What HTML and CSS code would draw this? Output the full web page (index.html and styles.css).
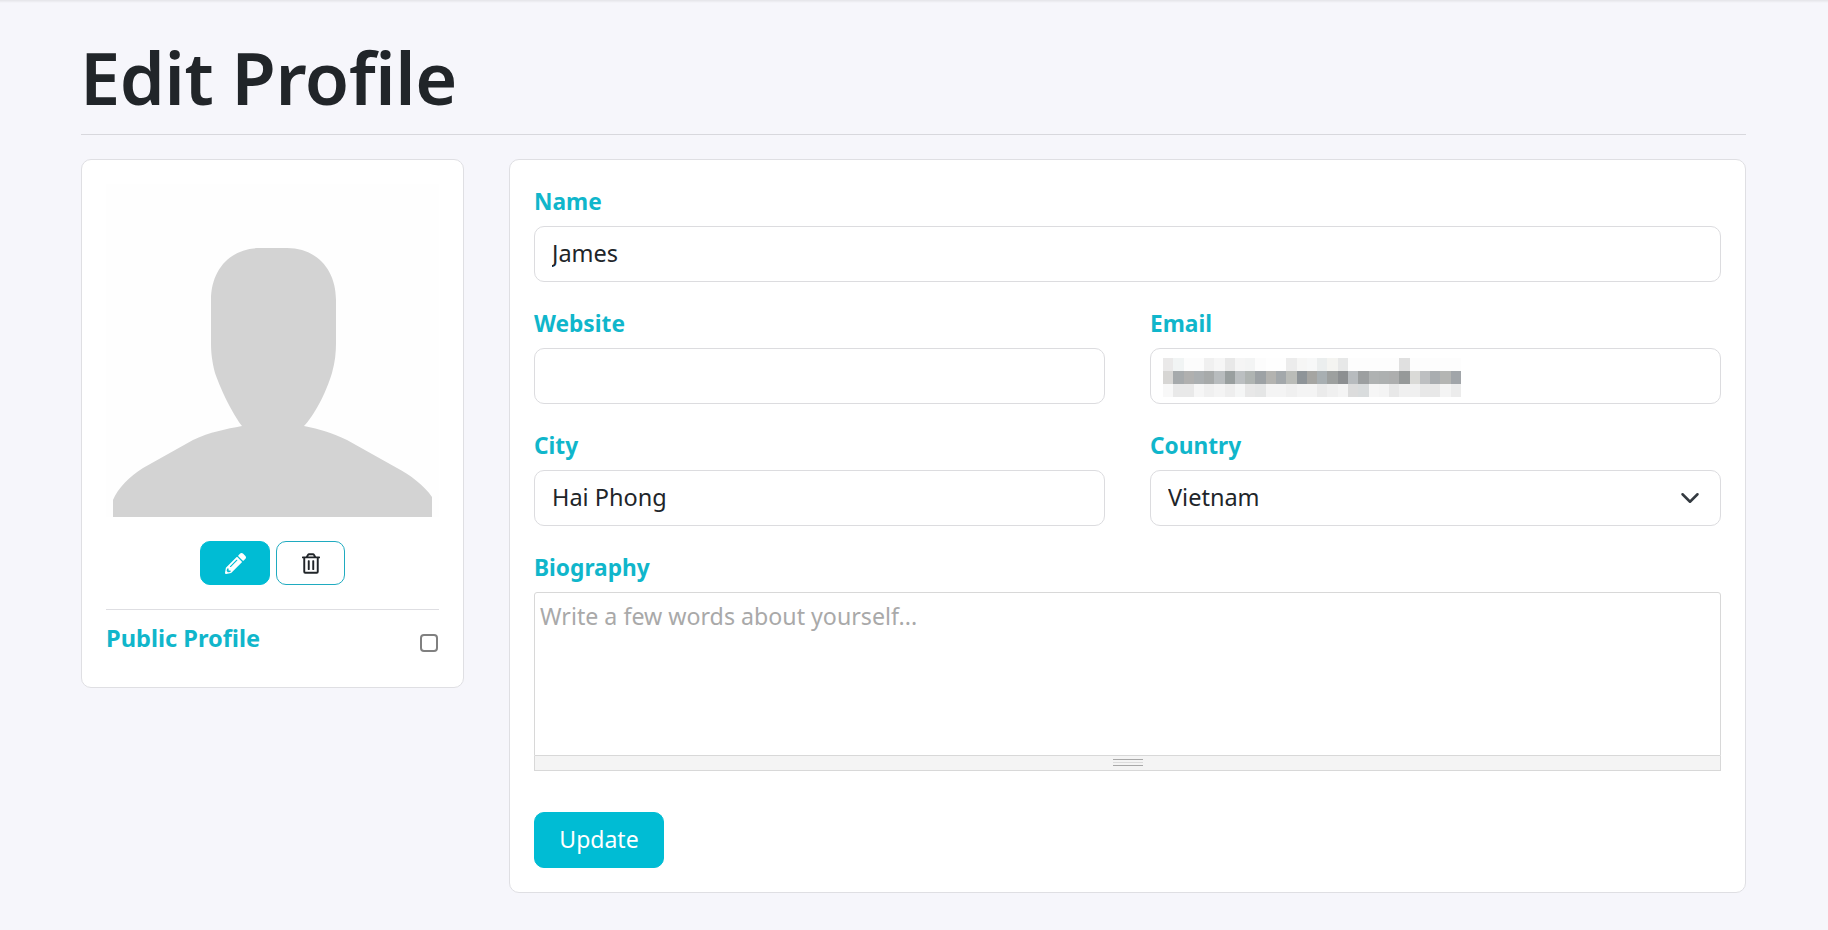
FILE: index.html
```html
<!DOCTYPE html>
<html lang="en">
<head>
<meta charset="utf-8">
<title>Edit Profile</title>
<link rel="stylesheet" href="styles.css">
</head>
<body>
<div class="topbar"></div>
<main class="page">
  <h1 class="title">Edit Profile</h1>
  <hr class="rule">
  <div class="columns">
    <aside class="card side">
      <svg class="avatar" viewBox="0 -1 333 333" aria-hidden="true">
        <path fill="#d3d3d3" d="M7 333V315C12 303 24 291 37 283L87 255C104 247 120 244 136 241C128 231 116 208 109 188C106 176 105 168 105 158V115C105 84 125 63 154 63H181C210 63 230 84 230 115V158C230 168 229 177 226 188C220 208 208 231 198 241C214 244 226 248 241 255L291 283C304 290 318 300 326 312V333Z"/>
      </svg>
      <div class="avatar-actions">
        <button type="button" class="icon-btn icon-btn-fill">
          <svg class="icon-pencil" viewBox="0 0 512 512" aria-hidden="true"><path fill="#fff" d="M497.9 142.1l-46.1 46.1c-4.7 4.7-12.3 4.7-17 0l-111-111c-4.7-4.7-4.7-12.3 0-17l46.1-46.1c18.7-18.7 49.1-18.7 67.9 0l60.1 60.1c18.8 18.7 18.8 49.1 0 67.9zM284.2 99.8L21.6 362.4.4 483.9c-2.9 16.4 11.4 30.6 27.8 27.8l121.5-21.3 262.6-262.6c4.7-4.7 4.7-12.3 0-17l-111-111c-4.8-4.7-12.4-4.7-17.1 0zM124.1 339.9c-5.5-5.5-5.5-14.3 0-19.8l154-154c5.5-5.5 14.3-5.5 19.8 0s5.5 14.3 0 19.8l-154 154c-5.5 5.5-14.3 5.5-19.8 0zM88 424h48v36.3l-64.5 11.3-31.1-31.1L51.7 376H88v48z"/></svg>
        </button>
        <button type="button" class="icon-btn icon-btn-line">
          <svg class="icon-trash" viewBox="0 0 448 512" aria-hidden="true"><path fill="#212529" d="M268 416h24a12 12 0 0 0 12-12V188a12 12 0 0 0-12-12h-24a12 12 0 0 0-12 12v216a12 12 0 0 0 12 12zM432 80h-82.41l-34-56.7A48 48 0 0 0 274.41 0H173.59a48 48 0 0 0-41.16 23.3L98.41 80H16A16 16 0 0 0 0 96v16a16 16 0 0 0 16 16h16v336a48 48 0 0 0 48 48h288a48 48 0 0 0 48-48V128h16a16 16 0 0 0 16-16V96a16 16 0 0 0-16-16zM171.84 50.91A6 6 0 0 1 177 48h94a6 6 0 0 1 5.15 2.91L293.61 80H154.39zM368 464H80V128h288zm-212-48h24a12 12 0 0 0 12-12V188a12 12 0 0 0-12-12h-24a12 12 0 0 0-12 12v216a12 12 0 0 0 12 12z"/></svg>
        </button>
      </div>
      <hr class="side-rule">
      <div class="public-row">
        <label class="label label-inline" for="public">Public Profile</label>
        <input class="check" id="public" type="checkbox">
      </div>
    </aside>

    <form class="card form">
      <div class="field">
        <label class="label" for="name">Name</label>
        <input class="control" id="name" type="text" value="James">
      </div>
      <div class="pair">
        <div class="field">
          <label class="label" for="website">Website</label>
          <input class="control" id="website" type="text">
        </div>
        <div class="field email-field">
          <label class="label" for="email">Email</label>
          <input class="control" id="email" type="text">
          <svg class="mosaic" viewBox="0 0 29 3" preserveAspectRatio="none" aria-hidden="true" shape-rendering="crispEdges">
            <g>
              <rect x="0" y="0" width="1" height="1" fill="#ebe9e8"/><rect x="1" y="0" width="1" height="1" fill="#f0f4f4"/><rect x="2" y="0" width="1" height="1" fill="#fcfcfc"/><rect x="3" y="0" width="1" height="1" fill="#fcfcfc"/><rect x="4" y="0" width="1" height="1" fill="#f0f0f0"/><rect x="5" y="0" width="1" height="1" fill="#f6f6f6"/><rect x="6" y="0" width="1" height="1" fill="#e8e8e8"/><rect x="7" y="0" width="1" height="1" fill="#f5f5f5"/><rect x="8" y="0" width="1" height="1" fill="#f2f4f4"/><rect x="9" y="0" width="1" height="1" fill="#fcfcfc"/><rect x="10" y="0" width="1" height="1" fill="#fefefe"/><rect x="11" y="0" width="1" height="1" fill="#fefefe"/><rect x="12" y="0" width="1" height="1" fill="#ececec"/><rect x="13" y="0" width="1" height="1" fill="#f6f6f4"/><rect x="14" y="0" width="1" height="1" fill="#f6f8f8"/><rect x="15" y="0" width="1" height="1" fill="#eaeeee"/><rect x="16" y="0" width="1" height="1" fill="#f4f4f0"/><rect x="17" y="0" width="1" height="1" fill="#e6e8e8"/><rect x="18" y="0" width="5" height="1" fill="#fdfdfd"/><rect x="23" y="0" width="1" height="1" fill="#e0e0e0"/><rect x="24" y="0" width="5" height="1" fill="#fdfdfd"/>
            </g>
            <g>
              <rect x="0" y="1" width="1" height="1" fill="#d8d6d2"/><rect x="1" y="1" width="1" height="1" fill="#a3abad"/><rect x="2" y="1" width="1" height="1" fill="#b0b0ae"/><rect x="3" y="1" width="1" height="1" fill="#a8b0b2"/><rect x="4" y="1" width="1" height="1" fill="#a5abaa"/><rect x="5" y="1" width="1" height="1" fill="#b5bdc0"/><rect x="6" y="1" width="1" height="1" fill="#96a09f"/><rect x="7" y="1" width="1" height="1" fill="#b9c0c2"/><rect x="8" y="1" width="1" height="1" fill="#adb5b2"/><rect x="9" y="1" width="1" height="1" fill="#9aa3a8"/><rect x="10" y="1" width="1" height="1" fill="#b3b3ae"/><rect x="11" y="1" width="1" height="1" fill="#a0a9ad"/><rect x="12" y="1" width="1" height="1" fill="#b9bcb6"/><rect x="13" y="1" width="1" height="1" fill="#8a959c"/><rect x="14" y="1" width="1" height="1" fill="#a5a5a0"/><rect x="15" y="1" width="1" height="1" fill="#a4b0b5"/><rect x="16" y="1" width="1" height="1" fill="#9ba09f"/><rect x="17" y="1" width="1" height="1" fill="#8b8f92"/><rect x="18" y="1" width="1" height="1" fill="#b5bbc0"/><rect x="19" y="1" width="1" height="1" fill="#9a9fa2"/><rect x="20" y="1" width="1" height="1" fill="#adb2b2"/><rect x="21" y="1" width="1" height="1" fill="#acb0b0"/><rect x="22" y="1" width="1" height="1" fill="#acaeae"/><rect x="23" y="1" width="1" height="1" fill="#95999a"/><rect x="24" y="1" width="1" height="1" fill="#dadad6"/><rect x="25" y="1" width="1" height="1" fill="#bcbfc2"/><rect x="26" y="1" width="1" height="1" fill="#a7adb2"/><rect x="27" y="1" width="1" height="1" fill="#b3b5b2"/><rect x="28" y="1" width="1" height="1" fill="#9ea6ac"/>
            </g>
            <g>
              <rect x="0" y="2" width="1" height="1" fill="#f8f8f8"/><rect x="1" y="2" width="2" height="1" fill="#e9e9e9"/><rect x="3" y="2" width="1" height="1" fill="#f6f6f6"/><rect x="4" y="2" width="1" height="1" fill="#f0f0f0"/><rect x="5" y="2" width="1" height="1" fill="#f4f4f4"/><rect x="6" y="2" width="1" height="1" fill="#eeeeee"/><rect x="7" y="2" width="1" height="1" fill="#f4f6f6"/><rect x="8" y="2" width="1" height="1" fill="#e8e8e8"/><rect x="9" y="2" width="1" height="1" fill="#e4e6e6"/><rect x="10" y="2" width="2" height="1" fill="#f4f4f4"/><rect x="12" y="2" width="1" height="1" fill="#f0f0f0"/><rect x="13" y="2" width="2" height="1" fill="#f4f4f4"/><rect x="15" y="2" width="1" height="1" fill="#ebebeb"/><rect x="16" y="2" width="1" height="1" fill="#f0f0f0"/><rect x="17" y="2" width="1" height="1" fill="#f4f4f4"/><rect x="18" y="2" width="1" height="1" fill="#dcdcdc"/><rect x="19" y="2" width="1" height="1" fill="#d8dcde"/><rect x="20" y="2" width="1" height="1" fill="#f6f6f6"/><rect x="21" y="2" width="1" height="1" fill="#f4f4f4"/><rect x="22" y="2" width="1" height="1" fill="#e8e8e8"/><rect x="23" y="2" width="2" height="1" fill="#f0f0f0"/><rect x="25" y="2" width="2" height="1" fill="#e8e8e8"/><rect x="27" y="2" width="1" height="1" fill="#f4f4f4"/><rect x="28" y="2" width="1" height="1" fill="#ececec"/>
            </g>
          </svg>
        </div>
      </div>
      <div class="pair">
        <div class="field">
          <label class="label" for="city">City</label>
          <input class="control" id="city" type="text" value="Hai Phong">
        </div>
        <div class="field">
          <label class="label" for="country">Country</label>
          <div class="select-wrap">
            <select class="control select" id="country"><option>Vietnam</option></select>
            <svg class="chevron" viewBox="0 0 16 16" aria-hidden="true"><path fill="none" stroke="#343a40" stroke-linecap="round" stroke-linejoin="round" stroke-width="2" d="M2 5l6 6 6-6"/></svg>
          </div>
        </div>
      </div>
      <div class="field">
        <label class="label" for="bio">Biography</label>
        <div class="editor">
          <textarea class="bio" id="bio" placeholder="Write a few words about yourself..."></textarea>
          <div class="statusbar"><span class="grip"></span></div>
        </div>
      </div>
      <button type="submit" class="submit">Update</button>
    </form>
  </div>
</main>
</body>
</html>
```

FILE: styles.css
```css
* { box-sizing: border-box; }

html, body { margin: 0; padding: 0; }

body {
  background: #f6f6fb;
  color: #212529;
  font-family: "Noto Sans", "Open Sans", sans-serif;
  min-height: 930px;
  overflow: hidden;
}

.topbar {
  height: 3px;
  background: linear-gradient(#e4e4e8, #f6f6fb);
}

.page {
  width: 1665px;
  margin: 0 0 0 81px;
}

.title {
  margin: 0;
  height: 131px;
  padding-top: 31px;
  font-size: 72px;
  line-height: 86px;
  font-weight: 600;
  letter-spacing: -.4px;
  text-indent: -1px;
  color: #212529;
}

.rule {
  margin: 0 0 24px;
  border: 0;
  border-top: 1px solid #d8d8dd;
}

.columns {
  display: grid;
  grid-template-columns: 383px 1237px;
  column-gap: 45px;
  align-items: start;
}

.card {
  background: #fff;
  border: 1px solid #dfdfe3;
  border-radius: 10px;
}

.side {
  height: 529px;
  padding: 24px;
}

.avatar {
  display: block;
  width: 333px;
  height: 333px;
  background: #fefefe;
}

.avatar-actions {
  display: flex;
  justify-content: center;
  gap: 6px;
  margin-top: 24px;
}

.icon-btn {
  display: flex;
  align-items: center;
  justify-content: center;
  height: 44px;
  padding: 0;
  border-radius: 10px;
}

.icon-btn-fill {
  width: 70px;
  background: #00bcd4;
  border: 1px solid #00bcd4;
}

.icon-btn-line {
  width: 69px;
  background: #fff;
  border: 1px solid #1fabc0;
}

.icon-pencil { width: 21px; height: 21px; }
.icon-trash { width: 18px; height: 21px; }

.side-rule {
  margin: 24px 0 0;
  border: 0;
  border-top: 1px solid #dedee2;
}

.public-row {
  display: flex;
  justify-content: space-between;
  align-items: flex-start;
  padding-top: 12px;
}

.label {
  display: block;
  margin-bottom: 7px;
  font-size: 22.7px;
  line-height: 35px;
  font-weight: 700;
  color: #10b6cb;
}

.label-inline {
  margin-bottom: 0;
  font-size: 23.6px;
  line-height: 33px;
}

.check {
  appearance: none;
  width: 18px;
  height: 18px;
  margin: 12px 1px 0 0;
  background: #fff;
  border: 2px solid #808080;
  border-radius: 4px;
}

.form {
  height: 734px;
  padding: 24px;
}

.pair {
  display: grid;
  grid-template-columns: 571px 571px;
  column-gap: 45px;
}

.field { margin-bottom: 24px; position: relative; }

.control {
  display: block;
  width: 100%;
  height: 56px;
  padding: 0 17px 3px;
  background: #fff;
  border: 1px solid #dcdcdf;
  border-radius: 10px;
  color: #212529;
  font-family: inherit;
  font-size: 23.5px;
  outline: none;
}

.select { appearance: none; }

.select-wrap { position: relative; }

.chevron {
  position: absolute;
  top: 18px;
  right: 21px;
  width: 20px;
  height: 20px;
  pointer-events: none;
}

.mosaic {
  position: absolute;
  left: 13px;
  top: 52px;
  width: 298px;
  height: 39px;
  filter: blur(.5px) saturate(.6);
}

.editor { margin-bottom: 41px; }

.bio {
  display: block;
  width: 100%;
  height: 164px;
  padding: 7px 5px;
  background: #fff;
  border: 1px solid #d8d8d8;
  border-radius: 3px 3px 0 0;
  color: #212529;
  font-family: inherit;
  font-size: 23.2px;
  line-height: 32px;
  resize: none;
  outline: none;
}

.bio::placeholder { color: #a9a9a9; opacity: 1; }

.statusbar {
  display: flex;
  align-items: center;
  justify-content: center;
  height: 15px;
  padding-bottom: 2px;
  background: #f4f4f4;
  border: 1px solid #d8d8d8;
  border-top: 0;
}

.grip {
  display: block;
  width: 30px;
  height: 7px;
  border-top: 1px solid #a8a8a8;
  border-bottom: 1px solid #a8a8a8;
  background: linear-gradient(#dcdcdc, #dcdcdc) center / 100% 1px no-repeat;
}

.submit {
  display: block;
  width: 130px;
  height: 56px;
  padding: 0 0 2px;
  background: #00bcd4;
  border: 1px solid #00bcd4;
  border-radius: 10px;
  color: #fff;
  font-family: inherit;
  font-size: 23px;
}
```
